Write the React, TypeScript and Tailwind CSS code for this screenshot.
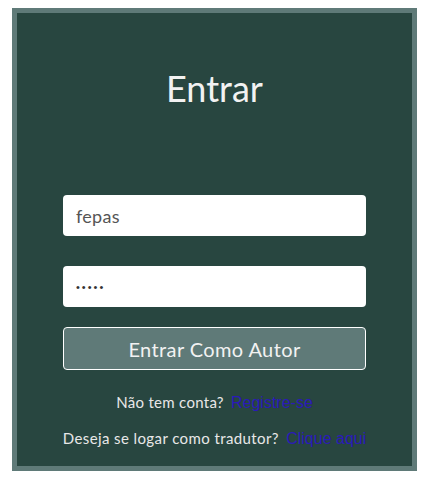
import React from "react";

export default function App() {
  return (
    <div className="w-[429px] h-[484px] bg-white pt-[8px] pl-[12px]" style={{ fontFamily: "Lato, 'Open Sans', sans-serif" }}>
      <div className="w-[405px] h-[463px] border-[5px] border-[#5f7a78] bg-[#284640] flex flex-col items-center">
        <h1 className="mt-[53px] h-[44px] leading-[44px] text-[36px] font-normal text-[#f2f2f2]">Entrar</h1>
        <div className="mt-[85px] w-[303px] flex flex-col">
          <input
            className="h-[41px] w-full rounded-[4px] bg-white px-[13px] text-[18px] tracking-[0.3px] text-[#555] outline-none"
            defaultValue="fepas"
          />
          <input
            type="password"
            className="mt-[30px] h-[41px] w-full rounded-[4px] bg-white px-[13px] text-[11px] tracking-[2px] text-[#333] outline-none"
            style={{ fontFamily: "'Liberation Sans', Arial, sans-serif" }}
            defaultValue="fepas"
          />
          <button className="mt-[20px] h-[43px] w-full rounded-[4px] border border-white bg-[#5f7a78] text-[20px] tracking-[0.4px] text-[#f2f2f2]">
            Entrar Como Autor
          </button>
        </div>
        <p className="mt-[22px] text-[15px] tracking-[0.3px] text-[#e8e8e8] leading-[20px]">
          Não tem conta?{" "}
          <a className="ml-[3px] text-[16px] text-[#2a1ab8] tracking-normal" style={{ fontFamily: "'Liberation Sans', Arial, sans-serif" }}>Registre-se</a>
        </p>
        <p className="mt-[15px] text-[15px] tracking-[0.4px] text-[#e8e8e8] leading-[20px]">
          Deseja se logar como tradutor?{" "}
          <a className="ml-[3px] text-[16px] text-[#2a1ab8] tracking-normal" style={{ fontFamily: "'Liberation Sans', Arial, sans-serif" }}>Clique aqui</a>
        </p>
      </div>
    </div>
  );
}
